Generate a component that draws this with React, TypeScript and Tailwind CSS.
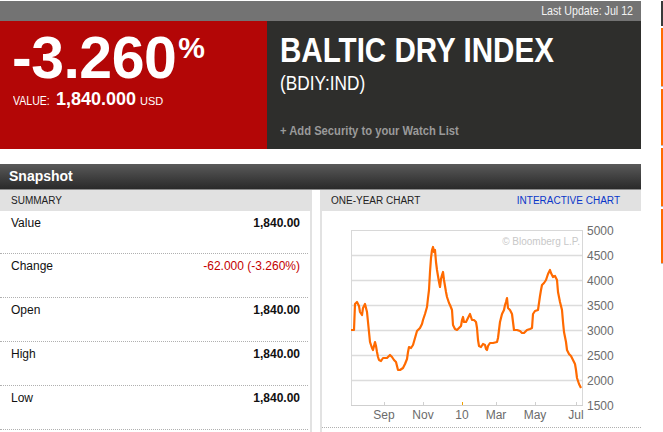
import React from "react";

const raw: [number, number][] = [
  [351, 330], [354, 330], [355, 304], [357, 302], [359, 306], [360, 312], [362, 315], [363, 308], [365, 304], [366, 308],
  [367, 312], [368, 322], [369, 332], [370, 342], [371, 345], [372, 348], [373, 350], [374, 346], [375, 342], [376, 346],
  [377, 352], [378, 357], [379, 360], [381, 361], [383, 358], [385, 358], [387, 358], [390, 355], [392, 357], [394, 360],
  [396, 362], [397, 366], [398, 370], [400, 370], [403, 368], [405, 364], [407, 359], [408, 352], [409, 347], [411, 348],
  [413, 345], [415, 338], [417, 331], [419, 329], [420, 328], [422, 324], [423, 320], [425, 314], [427, 307], [428, 298],
  [429, 290], [430, 272], [431, 258], [432, 250], [433, 247], [434, 252], [435, 250], [436, 262], [437, 270], [438, 276],
  [439, 282], [440, 287], [441, 279], [442, 275], [443, 272], [444, 280], [445, 286], [446, 292], [447, 297], [449, 303],
  [450, 305], [452, 310], [453, 325], [455, 329], [457, 330], [459, 328], [461, 326], [462, 320], [463, 317], [464, 322],
  [466, 322], [468, 318], [470, 314], [472, 320], [474, 320], [476, 322], [477, 328], [478, 340], [479, 346], [481, 347],
  [483, 344], [485, 345], [486, 349], [487, 350], [488, 346], [490, 343], [493, 343], [497, 342], [498, 338], [499, 330],
  [500, 322], [502, 314], [504, 310], [505, 305], [506, 302], [507, 298], [508, 308], [510, 310], [512, 314], [513, 322],
  [514, 330], [517, 330], [520, 331], [522, 333], [524, 333], [527, 330], [530, 329], [532, 328], [533, 314], [535, 311],
  [538, 310], [539, 303], [540, 296], [541, 290], [542, 285], [544, 283], [546, 280], [548, 274], [550, 270], [551, 273],
  [553, 277], [555, 276], [557, 280], [558, 292], [560, 302], [562, 310], [563, 322], [564, 332], [566, 342], [567, 350],
  [569, 354], [571, 356], [573, 360], [575, 364], [576, 370], [577, 378], [579, 384], [581, 388],
];

const X0 = 322;
const Y0 = 211;
const linePts = raw.map(([x, y]) => `${x - X0},${y - Y0}`).join(" ");

const yLabels = [5000, 4500, 4000, 3500, 3000, 2500, 2000, 1500];
const xLabels: [string, number][] = [
  ["Sep", 384],
  ["Nov", 423],
  ["10", 462],
  ["Mar", 496],
  ["May", 535],
  ["Jul", 576],
];

function Chart() {
  const left = 351 - X0;
  const right = 582 - X0;
  const top = 230 - Y0;
  const bottom = 405 - Y0;
  return (
    <svg width={319} height={216} className="block">
      {yLabels.map((v, i) => {
        const y = top + i * 25;
        return (
          <g key={v}>
            {i > 0 && i < 7 && (
              <line x1={left} x2={right} y1={y + 0.5} y2={y + 0.5} stroke="#dcdcdc" strokeWidth={1.5} />
            )}
            <text
              x={587 - X0}
              y={y + 4.5}
              fontSize={12}
              fill="#6b6b6b"
              fontFamily="'Liberation Sans', Arial, sans-serif"
            >
              {v}
            </text>
          </g>
        );
      })}
      <rect x={left + 0.5} y={top + 0.5} width={right - left} height={bottom - top} fill="none" stroke="#d8d8d8" strokeWidth={1} />
      <line x1={left} x2={right + 1} y1={bottom + 0.5} y2={bottom + 0.5} stroke="#cfcfcf" strokeWidth={1} />
      {xLabels.map(([t, x]) => (
        <g key={t}>
          <line
            x1={x - X0 + 0.5}
            x2={x - X0 + 0.5}
            y1={bottom - 3}
            y2={bottom}
            stroke={t === "10" ? "#f0a000" : "#d0d0d0"}
            strokeWidth={1}
          />
          <text
            x={x - X0}
            y={419 - Y0}
            fontSize={12}
            fill="#6b6b6b"
            textAnchor="middle"
            fontFamily="'Liberation Sans', Arial, sans-serif"
          >
            {t}
          </text>
        </g>
      ))}
      <text
        x={580 - X0}
        y={245 - Y0}
        fontSize={10}
        fill="#c8c8c8"
        textAnchor="end"
        fontFamily="'Liberation Sans', Arial, sans-serif"
      >
        © Bloomberg L.P.
      </text>
      <polyline points={linePts} fill="none" stroke="#ff6a00" strokeWidth={2.2} strokeLinejoin="round" />
    </svg>
  );
}

const rows: { label: string; value: string; red?: boolean }[] = [
  { label: "Value", value: "1,840.00" },
  { label: "Change", value: "-62.000 (-3.260%)", red: true },
  { label: "Open", value: "1,840.00" },
  { label: "High", value: "1,840.00" },
  { label: "Low", value: "1,840.00" },
];

export default function App() {
  return (
    <div className="w-[663px] h-[432px] bg-white flex overflow-hidden font-['Liberation_Sans',Arial,sans-serif]">
      <div className="w-[641px] pt-px flex flex-col">
        <div className="h-[20px] bg-[#737373] flex items-center justify-end pr-[8px] text-[13px] text-[#f2f2f2]">
          <span className="inline-block origin-right scale-x-[0.82]">Last Update: Jul 12</span>
        </div>
        <div className="flex h-[128px]">
          <div className="w-[267px] bg-[#b30606] text-white pl-[12px] pt-[9px]">
            <div className="flex items-start h-[56px]">
              <span className="text-[59px] font-bold leading-[56px] tracking-[-0.5px]">-3.260</span>
              <span className="text-[30px] font-bold leading-none mt-[3px] ml-[2px]">%</span>
            </div>
            <div className="flex items-baseline leading-none mt-[4px] pl-px">
              <span className="text-[12px] inline-block origin-left scale-x-[0.88] w-[38px]">VALUE:</span>
              <span className="text-[18px] font-bold ml-[5px]">1,840.000</span>
              <span className="text-[11px] ml-[4px]">USD</span>
            </div>
          </div>
          <div className="flex-1 bg-[#2e2e2c] text-white pl-[13px] pt-[11px] flex flex-col">
            <div className="text-[35px] font-bold leading-none origin-left scale-x-[0.845] whitespace-nowrap">BALTIC DRY INDEX</div>
            <div className="text-[21px] leading-none mt-[5px] origin-left scale-x-[0.82] whitespace-nowrap">(BDIY:IND)</div>
            <div className="mt-auto pb-[12px] text-[13.5px] font-bold leading-none text-[#9a9a9a] origin-left scale-x-[0.83] whitespace-nowrap">
              + Add Security to your Watch List
            </div>
          </div>
        </div>
        <div className="mt-[15px] h-[26px] bg-gradient-to-b from-[#5a5a5a] to-[#2a2a2a] border-b border-[#8c8c8c] flex items-center pl-[9px] text-[14px] font-bold text-white">
          Snapshot
        </div>
        <div className="flex flex-1">
          <div className="w-[312px] flex flex-col">
            <div className="h-[21px] bg-[#e1e1e1] pl-[11px] flex items-center text-[10px] text-[#222]">SUMMARY</div>
            <div className="flex-1 border-r-2 border-[#e2e2e2] pr-[2px]">
              {rows.map((r, i) => (
                <div
                  key={r.label}
                  className={`${i === 0 ? "h-[43px]" : "h-[44px]"} border-b border-dotted border-[#b0b0b0] flex justify-between items-start pt-[5px] pl-[11px] pr-[8px] text-[12px] leading-[15px]`}
                >
                  <span className="text-[#111]">{r.label}</span>
                  <span className={r.red ? "text-[#c40000]" : "font-bold text-[#111]"}>{r.value}</span>
                </div>
              ))}
            </div>
          </div>
          <div className="w-[321px] ml-auto flex flex-col">
            <div className="h-[21px] bg-[#e1e1e1] pl-[11px] pr-[21px] flex items-center justify-between text-[10px]">
              <span className="text-[#222]">ONE-YEAR CHART</span>
              <span className="text-[#0a36c9]">INTERACTIVE CHART</span>
            </div>
            <div className="flex-1 border-l-2 border-[#e2e2e2]">
              <div className="border-b border-dotted border-[#b0b0b0] w-[319px]">
                <Chart />
              </div>
            </div>
          </div>
        </div>
      </div>
      <div className="ml-auto w-[2px] flex flex-col pt-px">
        <div className="h-[25px] bg-[#3a3a3a]" />
        <div className="h-[2px]" />
        <div className="h-[58px] bg-[#ff6a00]" />
        <div className="h-[1px] bg-[#bbbbbb]" />
        <div className="h-[2px]" />
        <div className="h-[56px] bg-[#ff6a00]" />
        <div className="h-[1px] bg-[#bbbbbb]" />
        <div className="h-[2px]" />
        <div className="h-[58px] bg-[#ff6a00]" />
        <div className="h-[1px] bg-[#bbbbbb]" />
        <div className="h-[2px]" />
        <div className="h-[54px] bg-[#ff6a00]" />
        <div className="h-[1px] bg-[#bbbbbb]" />
      </div>
    </div>
  );
}
